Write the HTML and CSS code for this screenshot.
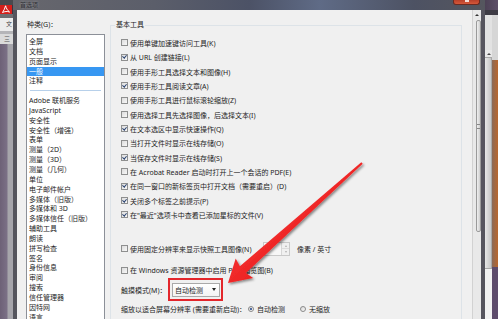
FILE: index.html
```html
<!DOCTYPE html>
<html lang="zh-CN">
<head>
<meta charset="UTF-8" />
<meta name="viewport" content="width=device-width, initial-scale=1" />
<title>首选项</title>
<link rel="stylesheet" href="styles.css">
</head>
<body>
<div class="screen">

    <!-- Окно Acrobat позади диалога -->
    <div class="app-strip">
        <div class="app-top"></div>
        <div class="app-logo">
            <svg width="12" height="10" viewBox="0 0 12 10">
                <path d="M2.5 8.5 C4 6.5 5 4 5.6 1.8 C6.2 4 7.2 6.4 9.6 8 C7.2 7.2 4.6 7.4 2.5 8.5 Z" fill="none" stroke="#fff" stroke-width="1"/>
            </svg>
        </div>
        <div class="app-gap"></div>
        <div class="app-menu">文</div>
        <div class="app-sep"></div>
        <div class="app-tool">三</div>
        <div class="app-rest"></div>
    </div>

    <!-- Диалог -->
    <div class="dialog">
        <div class="titlebar">
            <span class="title">首选项</span>
            <span class="close"><i></i></span>
        </div>
        <div class="dlg-body">

            <div class="cat-col">
                <div class="cat-label">种类(G)：</div>
                <ul class="cat-list">
                    <li>全屏</li>
                    <li>文档</li>
                    <li>页面显示</li>
                    <li class="selected">一般</li>
                    <li>注释</li>
                    <li class="sep"></li>
                    <li>Adobe 联机服务</li>
                    <li>JavaScript</li>
                    <li>安全性</li>
                    <li>安全性（增强）</li>
                    <li>表单</li>
                    <li>测量（2D）</li>
                    <li>测量（3D）</li>
                    <li>测量（几何）</li>
                    <li>单位</li>
                    <li>电子邮件帐户</li>
                    <li>多媒体（旧版）</li>
                    <li>多媒体和 3D</li>
                    <li>多媒体信任（旧版）</li>
                    <li>辅助工具</li>
                    <li>朗读</li>
                    <li>拼写检查</li>
                    <li>签名</li>
                    <li>身份信息</li>
                    <li>审阅</li>
                    <li>搜索</li>
                    <li>信任管理器</li>
                    <li>因特网</li>
                    <li>语言</li>
                </ul>
            </div>

            <div class="group">
                <div class="legend">基本工具</div>
                <div class="opts">
                    <div class="opt"><span class="cb"></span>使用单键加速键访问工具(K)</div>
                    <div class="opt"><span class="cb checked"></span>从 URL 创建链接(L)</div>
                    <div class="opt"><span class="cb"></span>使用手形工具选择文本和图像(H)</div>
                    <div class="opt"><span class="cb checked"></span>使用手形工具阅读文章(A)</div>
                    <div class="opt"><span class="cb"></span>使用手形工具进行鼠标滚轮缩放(Z)</div>
                    <div class="opt"><span class="cb"></span>使用选择工具先选择图像，后选择文本(I)</div>
                    <div class="opt"><span class="cb checked"></span>在文本选区中显示快速操作(Q)</div>
                    <div class="opt"><span class="cb"></span>当打开文件时显示在线存储(O)</div>
                    <div class="opt"><span class="cb checked"></span>当保存文件时显示在线存储(S)</div>
                    <div class="opt"><span class="cb"></span>在 Acrobat Reader 启动时打开上一个会话的 PDF(E)</div>
                    <div class="opt"><span class="cb checked"></span>在同一窗口的新标签页中打开文档（需要重启）(D)</div>
                    <div class="opt"><span class="cb checked"></span>关闭多个标签之前提示(P)</div>
                    <div class="opt"><span class="cb checked"></span>在"最近"选项卡中查看已添加星标的文件(V)</div>

                    <div class="opt opt-res">
                        <span class="res-label"><span class="cb"></span>使用固定分辨率来显示快照工具图像(N)</span>
                        <span class="spin">
                            <span class="spin-input"></span>
                            <span class="spin-btns"><b class="up"></b><b class="down"></b></span>
                        </span>
                        <span class="unit">像素 / 英寸</span>
                    </div>
                    <div class="opt opt-win"><span class="cb"></span>在 Windows 资源管理器中启用 PDF 缩览图(B)</div>

                    <div class="opt opt-touch">
                        <span class="touch-label">触摸模式(M)：</span>
                        <span class="dropdown marked">自动检测<b class="caret"></b></span>
                    </div>
                    <div class="opt opt-scale">
                        <span class="scale-label">缩放以适合屏幕分辨率 (需要重新启动)：</span>
                        <span class="radio checked"></span><span class="radio-text">自动检测</span>
                        <span class="radio"></span><span class="radio-text">无缩放</span>
                    </div>
                </div>
            </div>

            <div class="spacer"></div>

            <div class="vscroll">
                <div class="vs-up"></div>
                <div class="vs-thumb"><span></span></div>
            </div>
        </div>
    </div>

    <!-- Окно справа позади -->
    <div class="bg-strip">
        <div class="bg-top"></div>
        <div class="bg-bar"></div>
        <div class="bg-win">
            <div class="bg-scroll">
                <div class="bg-light"></div>
                <div class="bg-arrow"></div>
                <div class="bg-thumb"></div>
            </div>
            <div class="bg-edge">
                <div class="bg-edge-light"></div>
                <div class="bg-edge-orange"></div>
            </div>
        </div>
    </div>

    <!-- Красная стрелка (аннотация) -->
    <svg class="arrow" width="498" height="319" viewBox="0 0 498 319">
        <defs>
            <filter id="shadow" x="-10%" y="-10%" width="130%" height="130%">
                <feDropShadow dx="1.5" dy="1.5" stdDeviation="1" flood-color="#000" flood-opacity="0.45"/>
            </filter>
            <linearGradient id="red" x1="0" y1="0" x2="1" y2="1">
                <stop offset="0" stop-color="#ff5050"/>
                <stop offset="1" stop-color="#e00000"/>
            </linearGradient>
        </defs>
        <polygon filter="url(#shadow)" fill="url(#red)"
            points="228,283 253.1,278 245.9,273 362.7,163.7 361.3,162.3 239.9,266.3 235.7,258.6"/>
    </svg>

</div>
</body>
</html>
```

FILE: styles.css
```css
body {
    margin: 0;
    padding: 0;
    background: #3b3340;
    font-family: "Noto Sans", "Noto Sans CJK SC", sans-serif;
    font-size: 7px;
    color: #1e1e1e;
}
.screen {
    position: relative;
    display: flex;
    width: 498px;
    height: 319px;
    overflow: hidden;
}

/* Левая полоска — окно Acrobat */
.app-strip {
    width: 13px;
    display: flex;
    flex-direction: column;
}
.app-top {
    height: 5px;
    background: #4a4a4e;
}
.app-logo {
    height: 9px;
    width: 12px;
    background: #d61f1a;
    overflow: hidden;
}
.app-logo svg {
    display: block;
    margin-top: -1px;
}
.app-gap {
    height: 4px;
    background: #6e6e72;
}
.app-menu {
    height: 13px;
    background: #ececec;
    color: #444;
    font-size: 6px;
    line-height: 13px;
    padding-left: 6px;
    overflow: hidden;
    white-space: nowrap;
}
.app-sep {
    height: 3px;
    background: #b5b5b8;
}
.app-tool {
    height: 10px;
    background: #dadada;
    color: #555;
    font-size: 6px;
    line-height: 10px;
    padding-left: 4px;
    overflow: hidden;
}
.app-rest {
    flex: 1;
    background: linear-gradient(90deg, #6d6177 0, #7b7086 7px, #a6a5ab 8px, #a6a5ab 13px);
}

/* Диалог */
.dialog {
    width: 464px;
    border-left: 4px solid #55555d;
    border-right: 4px solid #56555e;
    display: flex;
    flex-direction: column;
    background: #f0f0f0;
}
.titlebar {
    flex: none;
    height: 10px;
    margin: 0 -4px;
    display: flex;
    align-items: flex-start;
    background: linear-gradient(90deg, #67676d 0, #5b5e6a 30%, #4c5266 50%, #5f6b86 65%, #4d5263 85%, #55565e 100%);
}
.title {
    margin: 1px 0 0 7px;
    font-size: 6px;
    line-height: 8px;
    color: #2e2e33;
    text-shadow: 0 0 3px rgba(255,255,255,0.45);
}
.close {
    margin-left: auto;
    margin-right: 5px;
    width: 25px;
    height: 4px;
    background: linear-gradient(#b8402a, #d5583a);
    border: 1px solid #6a2a20;
    border-top: none;
    border-radius: 0 0 3px 3px;
    display: flex;
    justify-content: center;
}
.close i {
    width: 4px;
    height: 2px;
    background: #f4dcd6;
}

.dlg-body {
    flex: 1;
    min-height: 0;
    overflow: hidden;
    display: flex;
    align-items: flex-start;
}

/* Категории */
.cat-col {
    width: 93px;
    padding-top: 10px;
}
.cat-label {
    height: 10px;
    line-height: 10px;
    margin-left: 10px;
    white-space: nowrap;
}
.cat-list {
    list-style: none;
    margin: 4px 0 0 9px;
    padding: 2px 0 0 0;
    width: 77px;
    height: 300px;
    border: 1px solid #8c9098;
    background: #fff;
    overflow: hidden;
}
.cat-list li {
    height: 9.85px;
    line-height: 9.85px;
    padding-left: 2px;
    white-space: nowrap;
}
.cat-list li.selected {
    background: #3797f2;
    color: #fff;
}
.cat-list li.sep {
    position: relative;
}
.cat-list li.sep::after {
    content: "";
    position: absolute;
    left: 3px;
    right: 3px;
    top: 4px;
    border-top: 1px solid #b7d0ea;
}

/* Группа «Основные инструменты» */
.group {
    width: 350px;
    margin-top: 15px;
    height: 320px;
    border: 1px solid #dde3e8;
}
.legend {
    display: table;
    height: 10px;
    margin: -6px 0 0 4px;
    padding: 0 1px;
    line-height: 10px;
    background: #f0f0f0;
}
.opts {
    padding: 5.8px 0 0 10px;
}
.opt {
    display: flex;
    align-items: center;
    height: 14.33px;
    white-space: nowrap;
}
.cb {
    position: relative;
    width: 7px;
    height: 7px;
    box-sizing: border-box;
    margin-right: 2px;
    border: 1px solid #8e8f8f;
    background: linear-gradient(135deg, #dcdcdc, #f8f8f8);
    flex: none;
}
.cb.checked::after {
    content: "";
    position: absolute;
    left: 1.3px;
    top: -0.3px;
    width: 1.5px;
    height: 3.2px;
    border-right: 1.2px solid #263f6e;
    border-bottom: 1.2px solid #263f6e;
    transform: rotate(40deg);
}

.opt-res {
    height: 15px;
    margin-top: 19.4px;
}
.res-label {
    display: flex;
    align-items: center;
    width: 142px;
}
.spin {
    display: flex;
    width: 27px;
    height: 14px;
    box-sizing: border-box;
    border: 1px solid #c9c9c9;
    background: #f7f7f7;
}
.spin-input {
    flex: 1;
    border-right: 1px solid #d6d6d6;
}
.spin-btns {
    width: 7px;
    display: flex;
    flex-direction: column;
}
.spin-btns b {
    flex: 1;
    display: flex;
    align-items: center;
    justify-content: center;
    background: #f0f0f0;
}
.spin-btns b.up {
    border-bottom: 1px solid #dcdcdc;
}
.spin-btns b::after {
    content: "";
    border-left: 1.5px solid transparent;
    border-right: 1.5px solid transparent;
}
.spin-btns b.up::after {
    border-bottom: 2px solid #b0b0b0;
}
.spin-btns b.down::after {
    border-top: 2px solid #b0b0b0;
}
.unit {
    margin-left: 7px;
}
.opt-win {
    margin-top: 6.4px;
}

.opt-touch {
    height: 20px;
    margin-top: 2.8px;
}
.touch-label {
    width: 51px;
}
.dropdown {
    position: relative;
    display: flex;
    align-items: center;
    width: 48px;
    height: 14px;
    box-sizing: border-box;
    padding-left: 2px;
    border: 1px solid #a9a9a9;
    background: linear-gradient(#ffffff, #f3f3f3);
}
.dropdown .caret {
    margin-left: auto;
    margin-right: 3px;
    border-left: 2.5px solid transparent;
    border-right: 2.5px solid transparent;
    border-top: 3px solid #222;
}
/* красная рамка аннотации */
.dropdown.marked::after {
    content: "";
    position: absolute;
    left: -5px;
    right: -4px;
    top: -6px;
    bottom: -5px;
    border: 2px solid #e3262b;
}

.opt-scale {
    height: 10px;
    margin-top: 4px;
}
.scale-label {
    width: 127px;
}
.radio {
    position: relative;
    width: 6px;
    height: 6px;
    box-sizing: border-box;
    border: 1px solid #8a8a8a;
    border-radius: 50%;
    background: linear-gradient(135deg, #d8d8d8, #fafafa);
}
.radio.checked::after {
    content: "";
    position: absolute;
    left: 0.8px;
    top: 0.8px;
    width: 2.4px;
    height: 2.4px;
    border-radius: 50%;
    background: #1c3f86;
}
.radio-text {
    margin: 0 15px 0 3px;
}

.spacer {
    width: 10px;
}

/* Полоса прокрутки диалога */
.vscroll {
    width: 9px;
    height: 309px;
    box-sizing: border-box;
    border-left: 1px solid #d2d2d2;
    background: #e9e9e9;
}
.vs-up {
    height: 10px;
    display: flex;
    align-items: center;
    justify-content: center;
}
.vs-up::after {
    content: "";
    border-left: 2px solid transparent;
    border-right: 2px solid transparent;
    border-bottom: 2px solid #333;
}
.vs-thumb {
    height: 212px;
    margin: 0 0 0 3px;
    box-sizing: border-box;
    border: 1px solid #9a9a9a;
    border-radius: 2px;
    background: linear-gradient(90deg, #f0f0f0, #cfcfcf);
    display: flex;
    align-items: center;
    justify-content: center;
}
.vs-thumb span {
    width: 3px;
    height: 3px;
    border-top: 1px solid #888;
    border-bottom: 1px solid #888;
}

/* Правая полоска — окно позади */
.bg-strip {
    flex: 1;
    display: flex;
    flex-direction: column;
}
.bg-top {
    height: 10px;
    background: linear-gradient(90deg, #4c4155, #5d4f68);
}
.bg-bar {
    height: 5px;
    background: #3d3b44;
}
.bg-win {
    flex: 1;
    display: flex;
}
.bg-scroll {
    width: 7px;
    display: flex;
    flex-direction: column;
    background: #f2f2f2;
}
.bg-light {
    height: 35px;
    background: #e2e2e2;
}
.bg-arrow {
    height: 7px;
    display: flex;
    align-items: center;
    justify-content: center;
    background: #e8e8e8;
}
.bg-arrow::after {
    content: "";
    border-left: 2px solid transparent;
    border-right: 2px solid transparent;
    border-bottom: 2px solid #444;
}
.bg-thumb {
    height: 210px;
    border: 1px solid #a8a8a8;
    border-left: none;
    background: linear-gradient(90deg, #e6e6e6, #c6c6c6);
}
.bg-edge {
    flex: 1;
    display: flex;
    flex-direction: column;
    background: #5e4c6c;
}
.bg-edge-light {
    height: 45px;
    background: #d6d6d6;
}
.bg-edge-orange {
    height: 207px;
    background: linear-gradient(90deg, #8a6a58, #b9662c);
}

.arrow {
    position: absolute;
    left: 0;
    top: 0;
    pointer-events: none;
}
```
